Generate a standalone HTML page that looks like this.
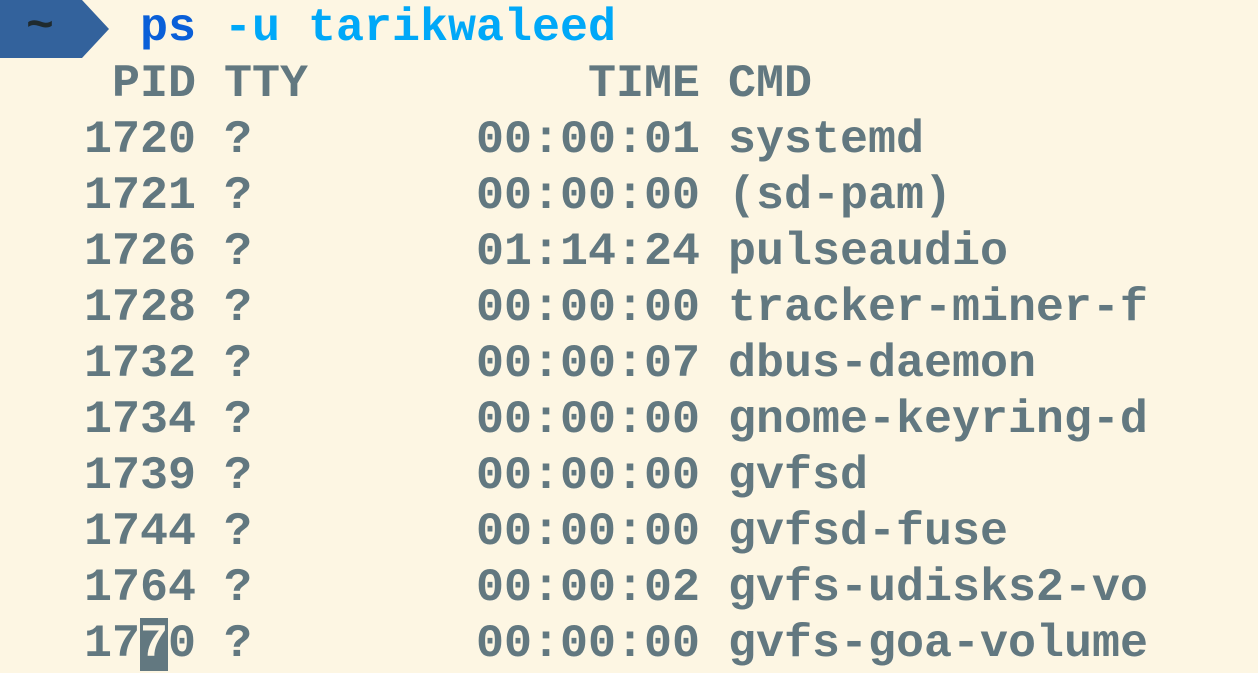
<!DOCTYPE html>
<html><head><meta charset="utf-8"><style>
html,body{margin:0;padding:0;width:1258px;height:652px;overflow:hidden;background:#fdf6e3;}
pre{position:absolute;left:0;top:1px;margin:0;font-family:"Liberation Mono",monospace;font-weight:bold;font-size:46.67px;line-height:56px;color:#627880;white-space:pre;}
.a{color:#0a5fd8}.b{color:#00a8f8}
.cur{background:#627880;color:#fdf6e3}
.seg{position:absolute;left:0;top:0;}
.t{position:absolute;left:26px;top:0px;font-family:"Liberation Mono",monospace;font-weight:bold;font-size:46.67px;line-height:56px;color:#1f2a2e;}
</style></head><body>
<svg class="seg" width="112" height="58"><polygon points="0,0 82,0 109,29 82,58 0,58" fill="#33629c"/></svg>
<div class="t">~</div>
<pre>     <span class="a">ps</span> <span class="b">-u tarikwaleed</span>
    PID TTY          TIME CMD
   1720 ?        00:00:01 systemd
   1721 ?        00:00:00 (sd-pam)
   1726 ?        01:14:24 pulseaudio
   1728 ?        00:00:00 tracker-miner-f
   1732 ?        00:00:07 dbus-daemon
   1734 ?        00:00:00 gnome-keyring-d
   1739 ?        00:00:00 gvfsd
   1744 ?        00:00:00 gvfsd-fuse
   1764 ?        00:00:02 gvfs-udisks2-vo
   17<span class="cur">7</span>0 ?        00:00:00 gvfs-goa-volume</pre>
</body></html>
